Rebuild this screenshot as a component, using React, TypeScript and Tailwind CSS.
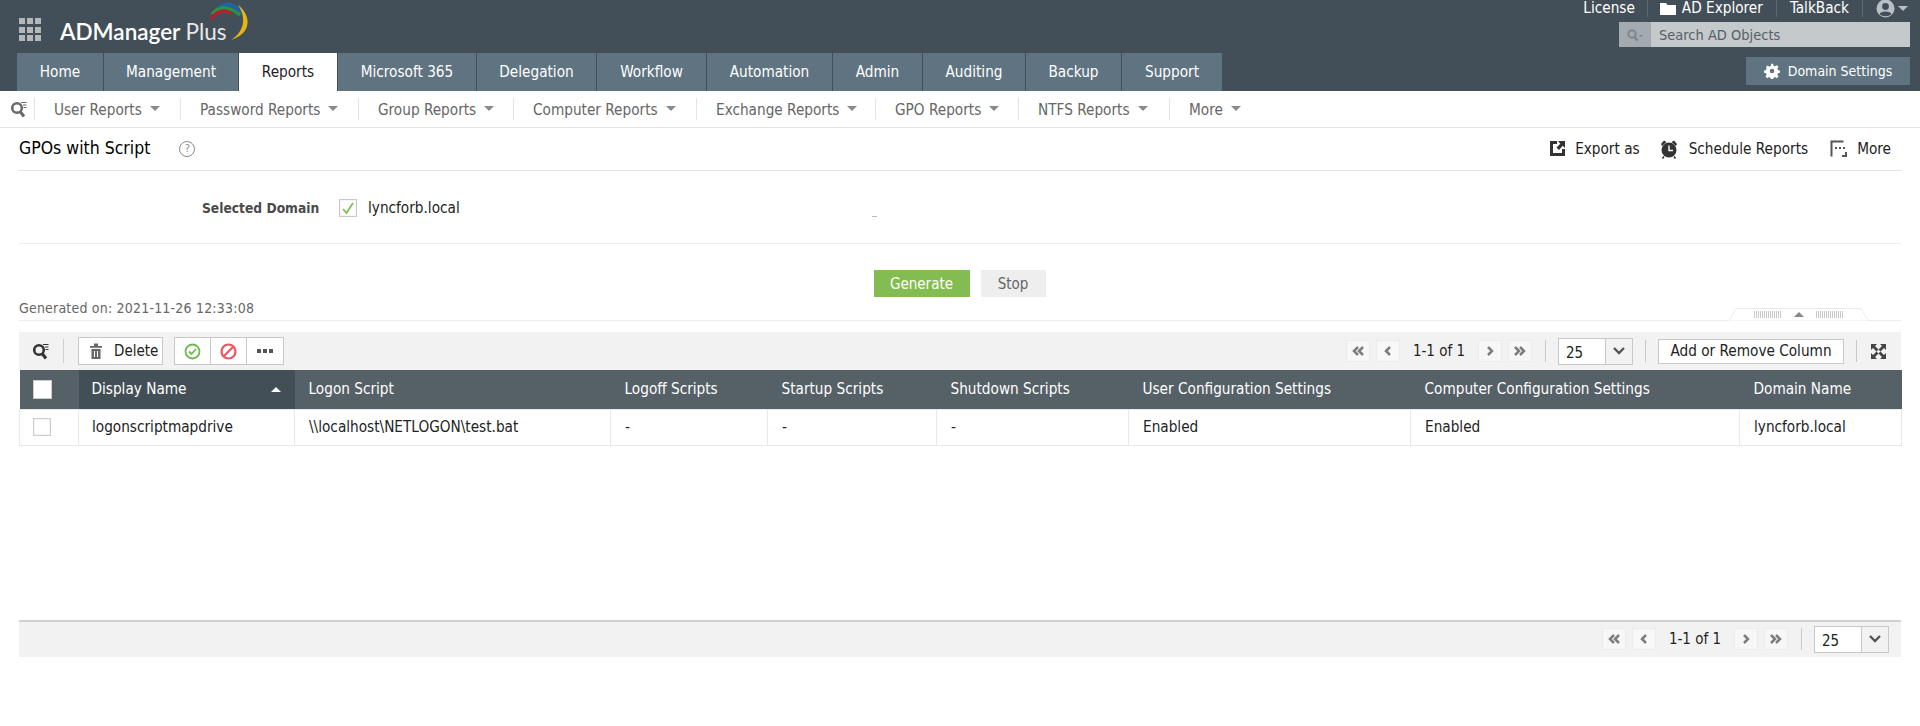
import React from "react";

const tabs: [string, string][] = [
  ["Home", "w-[86px]"],
  ["Management", "w-[134px]"],
  ["Reports", "w-[98px]"],
  ["Microsoft 365", "w-[138px]"],
  ["Delegation", "w-[119px]"],
  ["Workflow", "w-[109px]"],
  ["Automation", "w-[125px]"],
  ["Admin", "w-[89px]"],
  ["Auditing", "w-[102px]"],
  ["Backup", "w-[95px]"],
  ["Support", "w-[100px]"],
];

const sub: [string, string][] = [
  ["User Reports", "w-[145px]"],
  ["Password Reports", "w-[177px]"],
  ["Group Reports", "w-[154px]"],
  ["Computer Reports", "w-[182px]"],
  ["Exchange Reports", "w-[178px]"],
  ["GPO Reports", "w-[142px]"],
  ["NTFS Reports", "w-[150px]"],
  ["More", "w-[80px]"],
];

const cols: [string, string, string, string][] = [
  ["Display Name", "w-[216px]", "logonscriptmapdrive", "pl-[13px]"],
  ["Logon Script", "w-[316px]", "\\\\localhost\\NETLOGON\\test.bat", "pl-[14px]"],
  ["Logoff Scripts", "w-[157px]", "-", "pl-[14px]"],
  ["Startup Scripts", "w-[169px]", "-", "pl-[14px]"],
  ["Shutdown Scripts", "w-[192px]", "-", "pl-[14px]"],
  ["User Configuration Settings", "w-[282px]", "Enabled", "pl-[14px]"],
  ["Computer Configuration Settings", "w-[329px]", "Enabled", "pl-[14px]"],
  ["Domain Name", "w-[162px]", "lyncforb.local", "pl-[14px]"],
];

const Caret = ({ c = "border-t-[#8a8a8a]" }: { c?: string }) => (
  <span className={`inline-block w-0 h-0 border-x-[5px] border-x-transparent border-t-[5px] ${c}`} />
);

const SearchMenu = ({ c = "#666" }: { c?: string }) => (
  <svg width="18" height="18" viewBox="0 0 18 18" fill="none">
    <circle cx="7" cy="8" r="4.8" stroke={c} strokeWidth="2.6" />
    <path d="M10.500 12l3.500 4.500" stroke={c} strokeWidth="3" />
    <path d="M11 2.500h5.500M13 5h3.500M13.500 7.500h3" stroke={c} strokeWidth="1.200" />
  </svg>
);

const Pager = ({ glyph }: { glyph: string }) => (
  <span className="w-[24px] h-[22px] flex items-center justify-center bg-[#f7f7f7] border border-[#ebebeb]">
    <svg width="14" height="12" viewBox="0 0 14 12" fill="none" stroke="#7d7d7d" strokeWidth="2.500">
      {glyph === "first" && <path d="M7 2L3 6l4 4M12 2L8 6l4 4" />}
      {glyph === "prev" && <path d="M9 2L5 6l4 4" />}
      {glyph === "next" && <path d="M5 2l4 4-4 4" />}
      {glyph === "last" && <path d="M2 2l4 4-4 4M7 2l4 4-4 4" />}
    </svg>
  </span>
);

const Pagination = () => (
  <div className="flex items-center">
    <Pager glyph="first" />
    <span className="ml-[6px]"><Pager glyph="prev" /></span>
    <span className="w-[78px] text-center text-[15px] text-[#222]">1-1 of 1</span>
    <Pager glyph="next" />
    <span className="ml-[6px]"><Pager glyph="last" /></span>
    <span className="ml-[13px] w-px h-[22px] bg-[#c8c8c8]" />
    <div className="ml-[12px] w-[75px] h-[27px] flex border border-[#c8c8c8] bg-white">
      <span className="flex-1 pl-[7px] text-[15px] leading-[28px] text-[#222]">25</span>
      <span className="w-[27px] bg-[#f2f2f2] border-l border-[#c8c8c8] flex items-center justify-center">
        <svg width="14" height="10" viewBox="0 0 14 10" fill="none" stroke="#555" strokeWidth="2.400">
          <path d="M2 2l5 5 5-5" />
        </svg>
      </span>
    </div>
  </div>
);

const Logo = () => (
  <svg width="50" height="42" viewBox="0 0 50 42" fill="none" className="absolute left-[188px] top-0">
    <path d="M14 8Q24 -1 37 13" stroke="#1d63a8" strokeWidth="4" />
    <path d="M7 14.500Q18 1 35 15" stroke="#2f9146" strokeWidth="3.500" />
    <path d="M6 19.500Q13 7 27 13" stroke="#b5202f" strokeWidth="3.200" />
    <path d="M33 5C44 13 50 32 26 40C39 32 42 18 33 5Z" fill="#e8b612" />
  </svg>
);

export default function App() {
  return (
    <div className="min-h-[726px] bg-white font-['DejaVu_Sans_Condensed','Noto_Sans',sans-serif] text-[15px] text-[#222]">
      {/* top header */}
      <header className="h-[91px] bg-[#434f58] flex justify-between">
        <div className="flex flex-col justify-between pl-[17px]">
          <div className="relative h-[53px] flex items-center">
            <div className="grid grid-cols-3 gap-x-[2px] gap-y-[2.500px] w-[22px] mt-[6px] ml-[2px]">
              {Array.from({ length: 9 }).map((_, i) => (
                <span key={i} className="w-[6px] h-[6px] bg-[#b4b8bb]" />
              ))}
            </div>
            <span className="ml-[19px] mt-[11px] font-['Lato',sans-serif] text-[22.500px] text-white font-semibold whitespace-nowrap">
              ADManager <span className="font-normal text-[#e8e8e8]">Plus</span>
            </span>
            <Logo />
          </div>
          <nav className="flex gap-px h-[38px]">
            {tabs.map(([t, w]) => (
              <div
                key={t}
                className={`${w} flex items-center justify-center text-[15.200px] ${t === "Reports" ? "bg-white text-[#222]" : "bg-[#5f7381] text-white"}`}
              >
                {t}
              </div>
            ))}
          </nav>
        </div>
        <div className="flex flex-col items-end pr-[10px]">
          <div className="h-[17px] flex items-center text-white text-[15.200px] pr-[2px]">
            <span>License</span>
            <span className="w-px h-[17px] bg-[#5f6b74] mx-[12px]" />
            <svg width="16" height="13" viewBox="0 0 16 13" className="mr-[6px]" fill="#fff">
              <path d="M0 1h6l1.500 2H16v10H0z" />
            </svg>
            <span>AD Explorer</span>
            <span className="w-px h-[17px] bg-[#5f6b74] mx-[13px]" />
            <span>TalkBack</span>
            <span className="w-px h-[17px] bg-[#5f6b74] mx-[13px]" />
            <svg width="19" height="19" viewBox="0 0 19 19" className="mr-[3px]">
              <circle cx="9.500" cy="9.500" r="9" fill="#b9c0c5" />
              <circle cx="9.500" cy="7.500" r="3.400" fill="#434f58" />
              <path d="M3.500 15c1-3.500 11-3.500 12 0-3 3-9 3-12 0z" fill="#434f58" />
            </svg>
            <Caret c="border-t-[#b9c0c5]" />
          </div>
          <div className="mt-[5px] w-[291px] h-[25px] flex bg-[#c4c9cc]">
            <span className="w-[32px] bg-[#a3abb0] flex items-center justify-center">
              <svg width="18" height="14" viewBox="0 0 18 14" fill="none" stroke="#7b858b">
                <circle cx="6" cy="6" r="3.700" strokeWidth="2" />
                <path d="M8.500 9l3 3.500" strokeWidth="2.400" />
                <path d="M13 7h4l-2 2z" fill="#7b858b" stroke="none" />
              </svg>
            </span>
            <span className="pl-[8px] text-[14.500px] leading-[26px] text-[#555f66]">Search AD Objects</span>
          </div>
          <div className="mt-[10px] w-[164px] h-[28px] bg-[#5f7381] text-white flex items-center justify-center text-[14px]">
            <svg width="16" height="16" viewBox="0 0 24 24" className="mr-[8px]" fill="#fff">
              <path d="M13.700 1l.6 3a8.200 8.200 0 0 1 2.300 1l2.600-1.700 2.500 2.500-1.700 2.600a8.200 8.200 0 0 1 1 2.300l3 .6v3.400l-3 .6a8.200 8.200 0 0 1-1 2.300l1.700 2.600-2.500 2.500-2.600-1.700a8.200 8.200 0 0 1-2.300 1l-.6 3h-3.400l-.6-3a8.200 8.200 0 0 1-2.300-1l-2.600 1.700-2.500-2.500 1.700-2.600a8.200 8.200 0 0 1-1-2.300l-3-.6v-3.400l3-.6a8.200 8.200 0 0 1 1-2.300L2.900 6.300l2.500-2.500L8 5.500a8.200 8.200 0 0 1 2.300-1l.6-3.500zM12 8.500a3.500 3.500 0 1 0 0 7 3.500 3.500 0 0 0 0-7z" fillRule="evenodd" />
            </svg>
            Domain Settings
          </div>
        </div>
      </header>

      {/* sub nav */}
      <div className="h-[37px] border-b border-[#e3e3e3] flex items-center pl-[10px]">
        <span className="w-[24px] flex"><SearchMenu c="#6a6a6a" /></span>
        <span className="w-px h-[22px] bg-[#e3e3e3]" />
        {sub.map(([t, w], i) => (
          <React.Fragment key={t}>
            <div className={`${w} flex items-center gap-[8px] pl-[19px] text-[15.200px] text-[#666]`}>
              <span className="pt-[2px]">{t}</span>
              <Caret />
            </div>
            {i < sub.length - 1 && <span className="w-px h-[22px] bg-[#e3e3e3]" />}
          </React.Fragment>
        ))}
      </div>

      <main className="px-[19px]">
        {/* title */}
        <div className="h-[43px] border-b border-[#e3e3e3] flex items-center justify-between">
          <div className="flex items-center">
            <h1 className="text-[17.500px] text-black leading-none">GPOs with Script</h1>
            <span className="ml-[29px] w-[16px] h-[16px] rounded-full border border-[#8a8a8a] text-[#8a8a8a] text-[11px] flex items-center justify-center">?</span>
          </div>
          <div className="flex items-center text-[15.200px] text-[#222] pr-[10px]">
            <svg width="17" height="17" viewBox="0 0 17 17" className="mr-[9px]">
              <path d="M1 1h7v3H4v9h9V9h3v7H1z" fill="#333" />
              <path d="M16 1v7l-2.200-2.200L10 10 7.500 7.500l3.800-3.800L9 1z" fill="#333" />
            </svg>
            <span>Export as</span>
            <svg width="18" height="20" viewBox="0 0 18 20" className="ml-[20px] mr-[11px]">
              <path d="M1 5l3-3.500 2.500 1.500L2 7zM17 5l-3-3.500-2.500 1.500L16 7z" fill="#333" />
              <circle cx="9" cy="11" r="7.500" fill="#333" />
              <path d="M9 6.500V11.500h4" stroke="#fff" strokeWidth="1.400" fill="none" />
              <path d="M4 17.500L2.500 19.500M14 17.500l1.500 2" stroke="#333" strokeWidth="1.600" />
            </svg>
            <span>Schedule Reports</span>
            <svg width="17" height="17" viewBox="0 0 17 17" className="ml-[22px] mr-[10px]" fill="none">
              <path d="M1.500 16.500V1.500h12M12 16h4v-4" stroke="#555" strokeWidth="2" />
              <path d="M5 7h2v2H5zM9 7h2v2H9zM13 7h2v2h-2z" fill="#555" />
            </svg>
            <span>More</span>
          </div>
        </div>

        {/* domain row */}
        <div className="h-[73px] border-b border-[#ececec] flex items-center">
          <span className="ml-[183px] w-[137px] text-[13.700px] font-bold text-[#4a4a4a] whitespace-nowrap mt-[2px]">Selected Domain</span>
          <span className="w-[18px] h-[18px] border border-[#c9c9c9] shadow-[inset_0_0_2px_#ddd] flex items-center justify-center mt-[1px]">
            <svg width="14" height="14" viewBox="0 0 14 14" fill="none" stroke="#7fbe55" strokeWidth="1.800">
              <path d="M2 8l3.500 4L12 2" />
            </svg>
          </span>
          <span className="ml-[11px] text-[15.200px] text-[#222] mt-[2px]">lyncforb.local</span>
          <span className="ml-[412px] mt-[18px] w-[5px] h-px bg-[#bbb]" />
        </div>

        {/* actions */}
        <div className="relative h-[77px] border-b border-[#ececec]">
          <div className="flex justify-center gap-[11px] pt-[26px] pr-[1px]">
            <button className="w-[96px] h-[27px] pt-[1px] bg-[#83bc51] text-white text-[15px]">Generate</button>
            <button className="w-[65px] h-[27px] pt-[1px] bg-[#eeeeee] text-[#666] text-[15px]">Stop</button>
          </div>
          <div className="absolute left-0 bottom-[1px] text-[14px] text-[#666] tracking-[0.2px]">Generated on: 2021-11-26 12:33:08</div>
          <div className="absolute right-[33px] bottom-[-1px] w-[139px] h-[13px] flex items-center justify-center gap-[12px]">
            <svg width="139" height="13" viewBox="0 0 139 13" className="absolute left-0 top-0" fill="#fff" stroke="#ececec">
              <path d="M0 12.500L7 .5H132l7 12" />
            </svg>
            <span className="relative w-[28px] h-[7px] bg-[repeating-linear-gradient(90deg,#c9c9c9_0,#c9c9c9_1px,transparent_1px,transparent_2px)]" />
            <span className="relative w-0 h-0 border-x-[5px] border-x-transparent border-b-[5px] border-b-[#888]" />
            <span className="relative w-[28px] h-[7px] bg-[repeating-linear-gradient(90deg,#c9c9c9_0,#c9c9c9_1px,transparent_1px,transparent_2px)]" />
          </div>
        </div>

        {/* toolbar */}
        <div className="mt-[11px] h-[38px] bg-[#f2f2f2] flex items-center justify-between">
          <div className="flex items-center">
            <span className="ml-[13px] flex"><SearchMenu c="#333" /></span>
            <span className="ml-[13px] w-px h-[24px] bg-[#cfcfcf]" />
            <div className="ml-[14px] w-[85px] h-[28px] bg-white border border-[#c8c8c8] flex items-center text-[15px] text-[#222]">
              <svg width="14" height="18" viewBox="0 0 14 18" className="ml-[10px] mr-[11px]">
                <path d="M1 4h12v1.800H1zM5 1.500h4V4H5z" fill="#666" />
                <path d="M2.500 7h9v10h-9z" fill="#666" />
                <path d="M5.500 9v6M8.500 9v6" stroke="#fff" />
              </svg>
              Delete
            </div>
            <div className="ml-[11px] h-[28px] flex bg-white border border-[#c8c8c8]">
              <span className="w-[36px] flex items-center justify-center border-r border-[#c8c8c8]">
                <svg width="17" height="17" viewBox="0 0 17 17" fill="none" stroke="#6fb84f" strokeWidth="1.800">
                  <circle cx="8.500" cy="8.500" r="7" />
                  <path d="M5 8.500l2.500 2.500L12 6" />
                </svg>
              </span>
              <span className="w-[36px] flex items-center justify-center border-r border-[#c8c8c8]">
                <svg width="17" height="17" viewBox="0 0 17 17" fill="none" stroke="#f0545f" strokeWidth="2.200">
                  <circle cx="8.500" cy="8.500" r="7" />
                  <path d="M4 13L13 4" />
                </svg>
              </span>
              <span className="w-[36px] flex items-center justify-center gap-[2px]">
                <span className="w-[4px] h-[4px] bg-[#555]" />
                <span className="w-[4px] h-[4px] bg-[#555]" />
                <span className="w-[4px] h-[4px] bg-[#555]" />
              </span>
            </div>
          </div>
          <div className="flex items-center pr-[15px]">
            <Pagination />
            <span className="ml-[12px] w-px h-[22px] bg-[#c8c8c8]" />
            <div className="ml-[12px] w-[186px] h-[25px] bg-white border border-[#c8c8c8] flex items-center justify-center text-[15.200px] text-[#222]">Add or Remove Column</div>
            <span className="ml-[12px] w-px h-[22px] bg-[#c8c8c8]" />
            <svg width="15" height="15" viewBox="0 0 15 15" className="ml-[14px]" fill="#444">
              <path d="M0 0h6L4 2l3.500 3.500-2 2L2 4 0 6zM15 0v6l-2-2-3.500 3.500-2-2L11 2 9 0zM0 15V9l2 2 3.500-3.500 2 2L4 13l2 2zM15 15H9l2-2-3.500-3.500 2-2L13 11l2-2z" />
            </svg>
          </div>
        </div>

        {/* table */}
        <table className="table-fixed w-[1882px] border-collapse">
          <thead>
            <tr className="h-[39px] bg-[#566067] text-[15.200px] text-white text-left">
              <th className="w-[59px] font-normal pl-[13px]">
                <span className="block w-[19px] h-[19px] bg-white border border-[#ccc]" />
              </th>
              {cols.map(([h, w, , p], i) => (
                <th key={h} className={`${w} ${p} font-normal ${i === 0 ? "bg-[#434f57]" : ""}`}>
                  <div className="flex items-center justify-between pr-[14px]">
                    <span>{h}</span>
                    {i === 0 && <span className="w-0 h-0 border-x-[5px] border-x-transparent border-b-[5px] border-b-white" />}
                  </div>
                </th>
              ))}
            </tr>
          </thead>
          <tbody>
            <tr className="h-[36px] text-[15.200px] text-[#222]">
              <td className="pl-[13px] border border-[#e8e8e8]">
                <span className="block w-[18px] h-[18px] border border-[#ccc] shadow-[inset_0_0_2px_#ddd]" />
              </td>
              {cols.map(([h, , v, p]) => (
                <td key={h} className={`${p} border border-[#e8e8e8]`}>{v}</td>
              ))}
            </tr>
          </tbody>
        </table>

        {/* bottom pager */}
        <div className="mt-[174px] w-[1882px] h-[37px] bg-[#f2f2f2] border-t-2 border-[#d0d0d0] flex items-center justify-end pr-[12px]">
          <Pagination />
        </div>
      </main>
    </div>
  );
}
